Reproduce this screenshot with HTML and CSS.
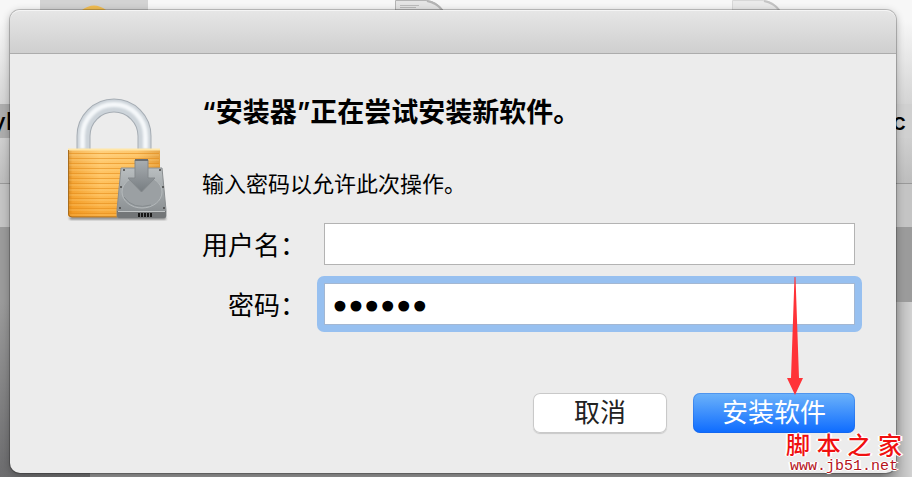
FILE: index.html
```html
<!DOCTYPE html>
<html lang="zh-CN">
<head>
<meta charset="utf-8">
<title>安装器</title>
<link rel="stylesheet" href="styles.css">
</head>
<body>
<div class="backdrop" aria-hidden="true">
  <div class="files">
    <span class="tile"><svg width="24" height="5" viewBox="0 0 24 5"><path d="M0 5Q12 -4 24 5Z" fill="#f2bd50"/></svg></span>
    <svg class="first" width="52" height="10" viewBox="0 0 52 10"><path d="M.5 10V.5H31Q41 1 48 10Z" fill="#e4e4e4" stroke="#b4b4b4"/><path d="M32 1Q42 3 47 10" fill="none" stroke="#b4b4b4" stroke-width="2"/><path d="M5 5.5H24M5 7.5H21" stroke="#bbb"/></svg>
    <svg class="second" width="52" height="10" viewBox="0 0 52 10"><path d="M.5 10V.5H31Q41 1 48 10Z" fill="#eaeaea" stroke="#d8d8d8"/><path d="M32 1Q42 3 47 10" fill="none" stroke="#c4c4c4" stroke-width="2"/></svg>
  </div>
  <div class="names"><span class="name-left">yl</span><span class="name-right">c</span></div>
  <div class="fade"></div>
  <div class="bar"></div>
  <div class="panel"></div>
  <div class="floor"></div>
</div>

<main class="dialog" role="dialog" aria-labelledby="title">
  <header class="titlebar"></header>
  <form class="content">
    <svg class="lock" width="104" height="126" viewBox="0 0 104 126" role="img" aria-label="锁">
      <defs>
        <linearGradient id="gold"><stop offset="0" stop-color="#c97d1b"/><stop offset=".05" stop-color="#f3a436"/><stop offset=".35" stop-color="#ffc566"/><stop offset=".75" stop-color="#fdb951"/><stop offset="1" stop-color="#de8c20"/></linearGradient>
        <linearGradient id="goldshade" x2="0" y2="1"><stop offset="0" stop-color="#fff0c0" stop-opacity=".3"/><stop offset=".5" stop-color="#ffb13a" stop-opacity=".1"/><stop offset="1" stop-color="#ee8907" stop-opacity=".55"/></linearGradient>
        <linearGradient id="steel" x2="0" y2="1"><stop offset="0" stop-color="#b9bec0"/><stop offset="1" stop-color="#858a8d"/></linearGradient>
        <linearGradient id="arrow" x2="0" y2="1"><stop offset="0" stop-color="#a9aeb1"/><stop offset="1" stop-color="#777d81"/></linearGradient>
        <pattern id="ridges" width="8" height="5" patternUnits="userSpaceOnUse"><path d="M0 .5H8" stroke="#e58d1c" stroke-opacity=".6"/><path d="M0 2H8" stroke="#ffdc91" stroke-opacity=".35"/></pattern>
        <filter id="soft" x="-10%" y="-40%" width="120%" height="180%"><feGaussianBlur stdDeviation="1"/></filter>
        <filter id="gloss" x="-10%" y="-10%" width="120%" height="120%"><feGaussianBlur stdDeviation="1.2"/></filter>
      </defs>
      <path d="M2 119H99V121.500H3Z" fill="#333" opacity=".6" filter="url(#soft)"/>
      <g fill="none">
        <path d="M16.500 52V38A30.500 30.500 0 0 1 77.500 38V52" stroke="#a6adb4" stroke-width="14"/>
        <path d="M16.500 52V38A30.500 30.500 0 0 1 77.500 38V52" stroke="#cdd4da" stroke-width="12"/>
        <path d="M15.500 51V38A31.500 31.500 0 0 1 78.500 38V51" stroke="#f5f8fa" stroke-width="5" filter="url(#gloss)"/>
      </g>
      <path d="M1 51H93V119H4Q1 119 1 116Z" fill="url(#gold)"/>
      <path d="M1 51H93V119H4Q1 119 1 116Z" fill="url(#goldshade)"/>
      <path d="M2 53H92V118H2Z" fill="url(#ridges)"/>
      <path d="M1 51.500H93" stroke="#ffe6a7" stroke-width="2"/>
      <path d="M1.500 52V116Q2 119 5 119H50" fill="none" stroke="#a96d1d"/>
      <path d="M54 70H95L99 112V118Q99 120 96 120H52Q50 120 50 118V112Z" fill="url(#steel)" stroke="#8a8e90"/>
      <path d="M50 113H99V118Q99 120 96 120H52Q50 120 50 118Z" fill="#737678"/>
      <path d="M51 113.500H98" stroke="#c1c5c6"/>
      <path d="M72 115V119M75 115V119M78 115V119M81 115V119M84 115V119" stroke="#171717" stroke-width="2"/>
      <ellipse cx="75" cy="94" rx="20" ry="16" fill="#9ba0a3" stroke="#b4b9bb"/>
      <path d="M57 99Q66 112 84 107" fill="none" stroke="#858b8e"/>
      <path d="M68 62H81V80H88L74.500 94L61 80H68Z" fill="url(#arrow)" stroke="#84898c"/>
      <path d="M68 62H81" stroke="#6b6e70" stroke-width="2"/>
      <g fill="#444"><circle cx="57" cy="72" r="1"/><circle cx="93" cy="72" r="1"/><circle cx="54" cy="89" r="1"/><circle cx="96" cy="89" r="1"/><circle cx="53" cy="110" r="1"/><circle cx="97" cy="110" r="1"/></g>
    </svg>
    <div class="main">
      <h1 id="title">“安装器”正在尝试安装新软件。</h1>
      <p class="message">输入密码以允许此次操作。</p>
      <div class="fields">
        <label for="user">用户名：</label>
        <input id="user" type="text">
        <label for="pass">密码：</label>
        <div class="focus-ring"><input id="pass" type="password" value="123456"></div>
      </div>
      <div class="actions">
        <button type="button" class="cancel">取消</button>
        <div class="target">
          <button type="button" class="install">安装软件</button>
          <svg class="pointer" width="18" height="118" viewBox="0 0 18 118" aria-hidden="true"><path d="M8.500 0H9.500L13 101H17L9 118L1 101H5Z" fill="#ff3338"/></svg>
        </div>
      </div>
    </div>
  </form>
</main>

<div class="watermark">
  <div class="brand"><span>脚</span><span>本</span><span>之</span><span>家</span></div>
  <div class="site">www.jb51.net</div>
</div>
</body>
</html>
```
FILE: styles.css
```css
* { box-sizing: border-box; }

body {
  position: relative;
  display: flow-root;
  min-height: 100vh;
  margin: 0;
  overflow: hidden;
  color: #000;
  font-family: "Noto Sans CJK SC", sans-serif;
}

/* Window behind the dialog */
.backdrop {
  position: absolute;
  inset: 0;
  z-index: -1;
  display: flex;
  flex-direction: column;
  background: #c9c9c9;
}

.files {
  display: flex;
  align-items: flex-start;
  height: 104px;
  padding-left: 40px;
  background: linear-gradient(#f7f7f7 20%, #d4d4d4);
}

.tile {
  display: flex;
  justify-content: center;
  align-items: flex-end;
  width: 108px;
  height: 10px;
  background: #d3d3d3;
}

.first { margin-left: 247px; }
.second { margin-left: 285px; }

.names {
  display: flex;
  justify-content: space-between;
  height: 34px;
  background: linear-gradient(90deg, #adadad 12px, #d0d0d0 12px);
  font: 500 24px/36px Inter, sans-serif;
}

.name-left { margin-left: -8px; }
.name-right { margin-right: 6px; }

.fade {
  height: 46px;
  border-bottom: 1px solid #999;
  background: linear-gradient(#cfcfcf, #bdbdbd);
}

.bar {
  height: 43px;
  background: #c4c4c4;
}

.panel {
  height: 75px;
  background: #9b9b9b;
}

.floor {
  flex: 1;
  background:
    linear-gradient(#9b9b9b, #6c6c6e) left / 90px 100% no-repeat,
    linear-gradient(90deg, #929292 880px, #b4b4b4 897px, #d2d2d2);
}

/* Dialog */
.dialog {
  margin: 10px 16px 3px 10px;
  border-radius: 10px;
  background: #ececec;
  box-shadow: 0 0 0 1px rgba(0, 0, 0, .2), 0 2px 8px rgba(0, 0, 0, .3);
}

.titlebar {
  height: 44px;
  border-top: 1px solid #f5f5f5;
  border-bottom: 1px solid #acacac;
  border-radius: 10px 10px 0 0;
  background: linear-gradient(#e6e6e6, #cfcfcf);
}

.content {
  display: flex;
  gap: 31px;
  padding: 40px 41px 40px 57px;
}

.lock {
  flex: none;
  margin-top: 4px;
}

.main { flex: 1; }

h1 {
  margin: 0;
  font: 600 27px/38px Inter, "Noto Sans CJK SC", sans-serif;
}

.message {
  margin: 33px 0 24px;
  font-size: 22px;
  line-height: 34px;
}

.fields {
  display: grid;
  grid-template-columns: auto 1fr;
  gap: 18px;
  align-items: center;
}

label {
  font-size: 26px;
  line-height: 40px;
  text-align: right;
}

input {
  display: block;
  width: 100%;
  min-width: 0;
  height: 42px;
  padding: 4px 7px 0;
  border: 1px solid #b3b3b3;
  border-radius: 0;
  outline: 0;
  background: #fff;
  font: 27px "DejaVu Sans", sans-serif;
}

.focus-ring {
  margin: -7px;
  padding: 7px;
  border-radius: 7px;
  background: #97c0f0;
}

.focus-ring input {
  border-color: #a3b7d2;
  -webkit-text-stroke: 3px #000;
}

.actions {
  display: flex;
  justify-content: flex-end;
  gap: 26px;
  margin-top: 68px;
}

button {
  display: block;
  height: 40px;
  padding: 0 0 4px;
  border: 0;
  border-radius: 7px;
  font: 26px/36px "Noto Sans CJK SC", sans-serif;
}

.cancel {
  width: 134px;
  background: #fff;
  color: #222;
  box-shadow: inset 0 0 0 1px #c9c9c9, 0 1px 1px rgba(0, 0, 0, .15);
}

.target { position: relative; }

.install {
  width: 162px;
  background: linear-gradient(#6db3fa, #0d6bff);
  color: #fff;
  box-shadow: inset 0 0 0 1px rgba(25, 95, 215, .35);
}

/* Callout above the install button */
.pointer {
  position: absolute;
  right: 51px;
  bottom: 38px;
}

/* Site mark over the window corner */
.watermark {
  position: absolute;
  right: 10px;
  bottom: 2px;
  width: 116px;
  text-shadow: 1px 0 #fff, -1px 0 #fff, 0 1px #fff, 0 -1px #fff, 2px 0 #fff, -2px 0 #fff;
}

.brand {
  display: flex;
  justify-content: space-between;
  color: #f01010;
  font: 500 24px/30px "Noto Sans CJK SC", serif;
}

.site {
  color: #b5121b;
  font: 15px/16px "Liberation Mono", monospace;
  text-align: center;
}
```
